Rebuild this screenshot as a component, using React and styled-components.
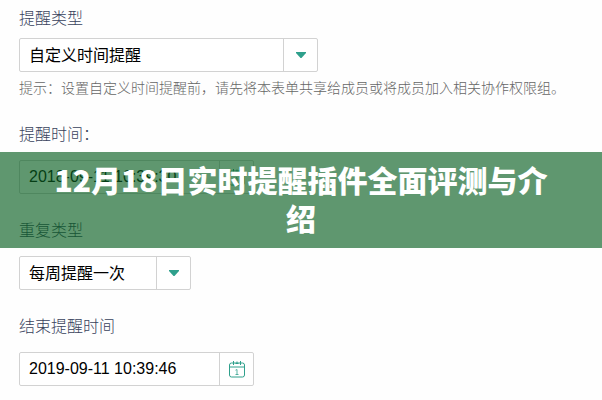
import { useState } from "react";
import styled, { createGlobalStyle } from "styled-components";

function CalendarIcon() {
  return (
    <svg width="18" height="18" viewBox="0 0 18 18" fill="none" stroke="#2fa08c" aria-hidden="true">
      <rect x="1.5" y="3" width="15" height="14" rx="2" />
      <path d="M1.5 7H16.5M5.5 1V5M12.5 1V5M7.5 3.5H10.5M9 1.5V4" />
      <path d="M7.5 10.2L9 9.5V14.5M7.5 14.5H10.5" strokeWidth="0.8" />
    </svg>
  );
}

function SelectField({ id, label, options, width, gap, hint }) {

  const [value, setValue] = useState(options[0]);

  return (
    <Field $gap={gap}>
      <Label htmlFor={id}>{label}</Label>
      <Control $width={width}>
        <Select id={id} value={value} onChange={(e) => setValue(e.target.value)}>
          {options.map((option) => (
            <option key={option}>{option}</option>
          ))}
        </Select>
        <Addon>
          <svg width="10" height="6" viewBox="0 0 10 6" aria-hidden="true">
            <path d="M0 0H10V1L5.5 6H4.5L0 1Z" fill="#2fa08c" />
          </svg>
        </Addon>
      </Control>
      {hint && <Hint>{hint}</Hint>}
    </Field>
  );
}

function DateField({ id, label, initial }) {

  const [value, setValue] = useState(initial);

  return (
    <Field>
      <Label htmlFor={id}>{label}</Label>
      <Control $width="235px">
        <Input id={id} type="text" value={value} onChange={(e) => setValue(e.target.value)} />
        <AddonButton type="button" aria-label="选择日期">
          <CalendarIcon />
        </AddonButton>
      </Control>
    </Field>
  );
}

function App() {
  return (
    <Page>
      <GlobalStyle />
      <Form>
        <SelectField
          id="type"
          label="提醒类型"
          options={["自定义时间提醒", "根据表单内日期字段提醒"]}
          width="299px"
          gap="6px"
          hint="提示：设置自定义时间提醒前，请先将本表单共享给成员或将成员加入相关协作权限组。"
        />
        <DateField id="start" label="提醒时间：" initial="2018-09-11 10:39:30" />
        <SelectField id="repeat" label="重复类型" options={["每周提醒一次", "每天提醒一次"]} width="172px" />
        <DateField id="end" label="结束提醒时间" initial="2019-09-11 10:39:46" />
      </Form>
      <Banner>
        <h1>12月18日实时提醒插件全面评测与介绍</h1>
      </Banner>
    </Page>
  );
}

const GlobalStyle = createGlobalStyle`
  * {
    box-sizing: border-box;
  }
  body {
    margin: 0;
    background: #fefefe;
    font-family: "Liberation Sans", "Noto Sans CJK SC", sans-serif;
  }
`

const Page = styled.main`
  position: relative;
`

const Form = styled.form`
  display: flex;
  flex-direction: column;
  gap: 24px;
  padding: 6px 19px 14px;
`

const Field = styled.div`
  display: flex;
  flex-direction: column;
  align-items: flex-start;
  gap: ${(props) => props.$gap || "12px"};
`

const Label = styled.label`
  font-size: 16px;
  line-height: 26px;
  font-weight: 300;
  color: #38425c;
`

const Control = styled.div`
  display: flex;
  width: ${(props) => props.$width};
  max-width: 100%;
  height: 34px;
  border: 1px solid #d2d2d2;
  border-radius: 2px;
  background: white;
`

const Select = styled.select`
  flex: 1;
  min-width: 0;
  padding: 0 9px;
  border: 0;
  appearance: none;
  background: none;
  color: black;
  font: inherit;
  font-size: 16px;
`

const Input = styled.input`
  flex: 1;
  min-width: 0;
  padding: 0 9px;
  border: 0;
  background: none;
  color: black;
  font: inherit;
  font-size: 16px;
`

const Addon = styled.span`
  display: flex;
  align-items: center;
  justify-content: center;
  width: 34px;
  border-left: 1px solid #d2d2d2;
`

const AddonButton = styled.button`
  display: flex;
  align-items: center;
  justify-content: center;
  width: 34px;
  padding: 0;
  border: 0;
  border-left: 1px solid #d2d2d2;
  background: none;
`

const Hint = styled.p`
  margin: 0;
  font-size: 14px;
  line-height: 20px;
  font-weight: 300;
  color: #666;
`

const Banner = styled.header`
  position: absolute;
  top: 152px;
  left: 0;
  right: 0;
  padding: 8px 44px 12px;
  background: rgba(9, 95, 34, 0.65);
  h1 {
    margin: 0;
    font-family: "Noto Sans CJK SC", sans-serif;
    font-size: 30px;
    line-height: 38px;
    font-weight: 900;
    text-align: center;
    color: white;
  }
`

export default App
